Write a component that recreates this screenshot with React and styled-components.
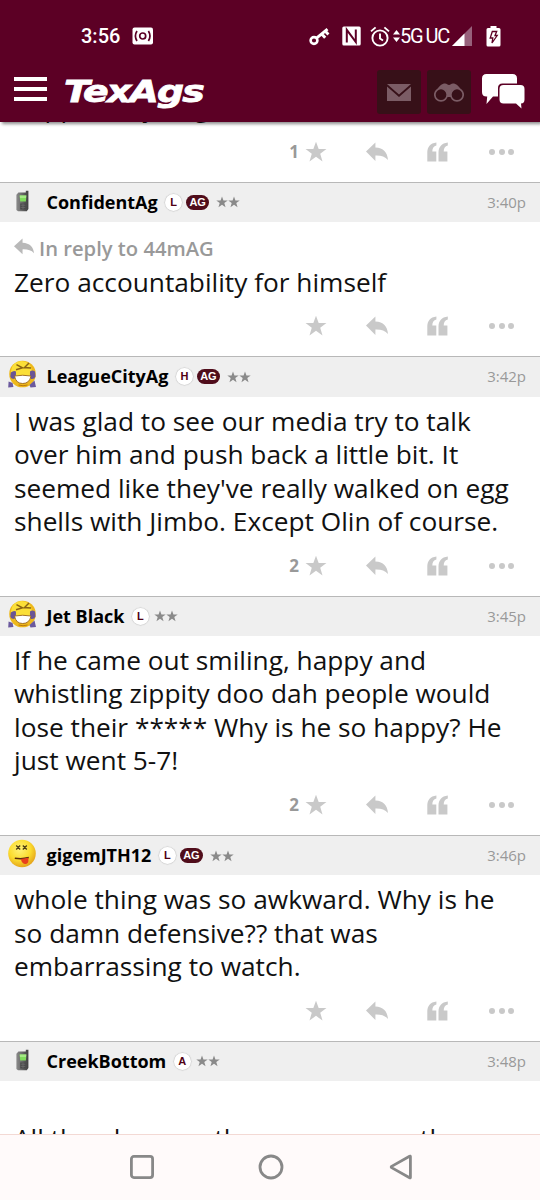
import React from 'react'
import styled, { createGlobalStyle } from 'styled-components'

const posts = [
  {
    user: 'ConfidentAg',
    avatar: 'phone',
    forum: 'L',
    ag: true,
    time: '3:40p',
    replyTo: '44mAG',
    lines: ['Zero accountability for himself'],
  },
  {
    user: 'LeagueCityAg',
    avatar: 'laugh',
    forum: 'H',
    ag: true,
    time: '3:42p',
    stars: 2,
    lines: [
      'I was glad to see our media try to talk',
      'over him and push back a little bit. It',
      "seemed like they've really walked on egg",
      'shells with Jimbo. Except Olin of course.',
    ],
  },
  {
    user: 'Jet Black',
    avatar: 'laugh',
    forum: 'L',
    time: '3:45p',
    stars: 2,
    lines: [
      'If he came out smiling, happy and',
      'whistling zippity doo dah people would',
      'lose their ***** Why is he so happy? He',
      'just went 5-7!',
    ],
  },
  {
    user: 'gigemJTH12',
    avatar: 'tongue',
    forum: 'L',
    ag: true,
    time: '3:46p',
    lines: [
      'whole thing was so awkward. Why is he',
      'so damn defensive?? that was',
      'embarrassing to watch.',
    ],
  },
  {
    user: 'CreekBottom',
    avatar: 'phone',
    forum: 'A',
    time: '3:48p',
    lines: ['\u00a0', 'All the plays are the same across the'],
  },
]

function Phone() {
  return (
    <svg width="28" height="28" viewBox="0 0 28 28">
      <defs>
        <linearGradient id="case" x1="0" x2="1">
          <stop offset="0" stopColor="#8b8b8b" />
          <stop offset="0.5" stopColor="#666" />
          <stop offset="1" stopColor="#3f3f3f" />
        </linearGradient>
      </defs>
      <path d="M17.800 3.800h2.600v18.200l-1.600 2.300H10l-1.600-1.400V7.800l2-2.200h7.400z" fill="url(#case)" />
      <path d="M11.600 8.600h6.800l-.5 6h-5.700z" fill="#7fdc5c" />
      <path d="M11.800 8.600h6.400l-.2 2.400h-6z" fill="#a5ea86" />
      <path d="M12.200 16.400h5.600v6h-5.600z" fill="#4a4a4a" />
      <path d="M12.700 18.200h4.600M12.700 20.400h4.600M15 16.600v5.600" stroke="#777" strokeWidth=".6" />
    </svg>
  )
}

function Laugh() {
  return (
    <svg width="30" height="30" viewBox="0 0 30 30">
      <circle cx="15.500" cy="14" r="13.300" fill="#eeb91c" />
      <circle cx="14.500" cy="11.500" r="10.500" fill="#fbdf38" />
      <path d="M9.500 4.600l6 3.200-6.500 2M22 3l-4.500 4.600 6.500.4" fill="none" stroke="#8a6414" strokeWidth="1.500" />
      <path d="M3.800 12.500q3-2.500 5.200-1 .6 4-1.500 7.500-3.500 0-4.200-2.500zM28 11.500q-3-2-5 0-.6 4 1 7.500 3.500.5 4.600-2.500z" fill="#6a5596" />
      <path d="M7.500 16q8-1.500 16.500 0-1.500 7.500-8.300 7.500T7.500 16z" fill="#fff" stroke="#9a6418" strokeWidth=".9" />
      <path d="M11.500 25q4.500 1.500 9 0" fill="none" stroke="#b9780f" strokeWidth="1" />
      <path d="M1.600 21.500l4 1.500.8 4-5.200.6zM27.500 20.500l1.500 6.500-5.500.4-1-2.400z" fill="#6b5a9e" />
    </svg>
  )
}

function Tongue() {
  return (
    <svg width="30" height="30" viewBox="0 0 30 30">
      <defs>
        <radialGradient id="face" cx=".42" cy=".35" r=".65">
          <stop offset="0" stopColor="#fff27a" />
          <stop offset="0.6" stopColor="#fbdc2e" />
          <stop offset="1" stopColor="#e5a51c" />
        </radialGradient>
      </defs>
      <circle cx="15" cy="14.500" r="13.800" fill="url(#face)" />
      <path d="M9.200 6.500l4 4m0-4l-4 4M15.800 6.500l4 4m0-4l-4 4" stroke="#4c3c12" strokeWidth="1.300" />
      <path d="M7.800 19.200q7 1.200 14-.6" fill="none" stroke="#5a2c0e" strokeWidth="1.600" />
      <path d="M13.800 20l7.400-1.200c.6 3 .2 5.400-1.600 6-2.600.8-5-1-5.800-4.800z" fill="#e8401c" />
    </svg>
  )
}

const avatars = { phone: Phone, laugh: Laugh, tongue: Tongue }

function StarIcon({ size, color }) {
  return (
    <svg width={size} height={size} viewBox="0 0 24 24">
      <path fill={color} d="M12 .8l2.900 8h8.500l-6.800 5.100 2.500 8.400-7.100-5-7.100 5 2.500-8.400L.6 8.800h8.500z" />
    </svg>
  )
}

function ReplyIcon({ width, height, color }) {
  return (
    <svg width={width} height={height} viewBox="0 0 22 20" preserveAspectRatio="none">
      <path fill={color} d="M0 9.600L9.400.6v5C17.400 6 21.400 10.400 22 18c-3-3.600-7-4.800-12.600-4.600v5.600z" />
    </svg>
  )
}

function QuoteIcon() {
  return (
    <svg width="21" height="20" viewBox="0 0 21 20">
      <path fill="#c9c9c9" d="M9.400.4v3.200C6.600 4.400 5.400 6 5.300 9.600h4V19.400H.3V10.600C.3 4.800 3.200 1.200 9.400.4zM20.800.4v3.200C18 4.400 16.800 6 16.700 9.600h3.700V19.400H11.500V10.600C11.500 4.800 14.600 1.200 20.800.4z" />
    </svg>
  )
}

function PostActions({ stars }) {
  return (
    <Actions>
      <Count>{stars}</Count>
      <StarIcon size={22} color="#c9c9c9" />
      <ActionSlot>
        <ReplyIcon width={22} height={20} color="#c9c9c9" />
      </ActionSlot>
      <ActionSlot>
        <QuoteIcon />
      </ActionSlot>
      <Dots>
        <Dot />
        <Dot />
        <Dot />
      </Dots>
    </Actions>
  )
}

function Post({ post }) {
  const Avatar = avatars[post.avatar]
  return (
    <PostBox>
      <PostHeader>
        <AvatarBox>
          <Avatar />
        </AvatarBox>
        <UserName>{post.user}</UserName>
        <Forum>{post.forum}</Forum>
        {post.ag && <AgBadge>AG</AgBadge>}
        <Rating $wide={post.ag}>
          <StarIcon size={12} color="#8a8a8a" />
          <StarIcon size={12} color="#8a8a8a" />
        </Rating>
        <Time>{post.time}</Time>
      </PostHeader>
      <Body>
        {post.replyTo && (
          <InReply>
            <ReplyIcon width={20} height={17} color="#b9b9b9" />
            <span>In reply to {post.replyTo}</span>
          </InReply>
        )}
        {post.lines.map((line, i) => (
          <Line key={i}>{line}</Line>
        ))}
      </Body>
      <PostActions stars={post.stars} />
    </PostBox>
  )
}

function StatusBar() {
  return (
    <Status>
      <Clock>3:56</Clock>
      <svg width="22" height="18" viewBox="0 0 22 18">
        <rect x=".5" y=".5" width="20.500" height="17" rx="2" fill="#fff" />
        <g fill="none" stroke="#5c0025" strokeWidth="1.700">
          <circle cx="10.700" cy="9" r="3" />
          <path d="M5 4Q1.800 9 5 14M16.400 4Q19.600 9 16.400 14" />
        </g>
      </svg>
      <StatusRight>
        <svg width="21" height="19" viewBox="0 0 21 19">
          <circle cx="5" cy="13.500" r="3.400" fill="none" stroke="#fff" strokeWidth="2.600" />
          <path d="M7.500 11.200L18.500 2.200M13 7.200l3.200 3.600M16.400 4.200l3 3.200" stroke="#fff" strokeWidth="2.900" fill="none" />
        </svg>
        <NfcSlot>
          <svg width="19" height="20" viewBox="0 0 19 20">
            <rect x=".3" y=".5" width="18.400" height="19" rx="1.500" fill="#fff" />
            <path d="M4.800 16.500V3.800L13.800 16V3.500" fill="none" stroke="#5c0025" strokeWidth="2" />
          </svg>
        </NfcSlot>
        <AlarmSlot>
          <svg width="20" height="21" viewBox="0 0 20 21" fill="none" stroke="#fff" strokeWidth="1.900">
            <circle cx="10" cy="12" r="7.600" />
            <path d="M10 7.500V12.500l3 2M1 5.400L5.600 1.400M19 5.400L14.400 1.400" />
          </svg>
        </AlarmSlot>
        <svg width="7" height="12" viewBox="0 0 7 12">
          <path d="M3.500 0L7 4.600H0zM3.500 12L0 7.400h7z" fill="#fff" />
        </svg>
        <Network>5G<span>UC</span></Network>
        <svg width="21" height="20" viewBox="0 0 21 20">
          <path d="M20 0v20H0z" fill="#97617b" />
          <path d="M12.500 7.500V20H0z" fill="#fff" />
        </svg>
        <BatterySlot>
          <svg width="15" height="21" viewBox="0 0 15 21">
            <path d="M4.500 0h6v2H13q1.500 0 1.500 1.500v15.500q0 1.500-1.500 1.500H2q-1.500 0-1.500-1.500V3.500Q.5 2 2 2h2.500z" fill="#fff" />
            <path d="M6.300 5.500h4.400L9 9.500h2.200L6 17l.8-5H4.200z" fill="none" stroke="#5c0025" strokeWidth="1.300" />
          </svg>
        </BatterySlot>
      </StatusRight>
    </Status>
  )
}

function Header() {
  return (
    <TopBar>
      <StatusBar />
      <Toolbar>
        <Burger>
          <span />
          <span />
          <span />
        </Burger>
        <Logo>TexAgs</Logo>
        <ToolButton>
          <svg width="24" height="17" viewBox="0 0 24 17">
            <path d="M0 0h24L12 10.600zM0 2.400L12 13 24 2.400V17H0z" fill="#7b5c65" />
          </svg>
        </ToolButton>
        <ToolButton>
          <svg width="30" height="19" viewBox="0 0 30 19">
            <path d="M3 7C5 3 8 .5 11 .5c2 0 2.500 1.500 4 1.500s2-1.500 4-1.500c3 0 6 2.500 8 6.500l-5 3-5 4h-4l-4-4z" fill="#7b5c65" />
            <circle cx="7" cy="11.700" r="6.200" fill="#371018" stroke="#7b5c65" strokeWidth="1.700" />
            <circle cx="23" cy="11.700" r="6.200" fill="#371018" stroke="#7b5c65" strokeWidth="1.700" />
          </svg>
        </ToolButton>
        <ChatButton>
          <svg width="43" height="35" viewBox="0 0 43 35">
            <path d="M4.500 0h26Q35 0 35 4.500V9.500H20.500Q16 9.500 16 14v8.500h-5L4.500 30l.7-7.500H4.500Q0 22.500 0 18V4.500Q0 0 4.500 0z" fill="#fff" />
            <path d="M21.500 11h17q4 0 4 4v10.500q0 4-3.500 4l.5 5L34 29.500H21.500q-4 0-4-4V15q0-4 4-4z" fill="#fff" />
          </svg>
        </ChatButton>
      </Toolbar>
    </TopBar>
  )
}

function NavBar() {
  return (
    <Nav>
      <svg width="24" height="24" viewBox="0 0 24 24">
        <rect x="1.400" y="1.400" width="21.200" height="21.200" rx="2.500" />
      </svg>
      <svg width="28" height="26" viewBox="0 0 28 26">
        <circle cx="13" cy="13" r="11" />
      </svg>
      <svg width="24" height="26" viewBox="0 0 24 26">
        <path d="M21.400 2.600v20.800q0 .8-.8.400L2.600 13.600q-.8-.6 0-1.200L20.600 2.200q.8-.4.800.4z" />
      </svg>
    </Nav>
  )
}

export default function App() {
  return (
    <Screen>
      <GlobalStyle />
      <Header />
      <Thread>
        <FirstPost>
          <Line>Supposedly to go</Line>
          <PostActions stars={1} />
        </FirstPost>
        {posts.map((post) => (
          <Post key={post.user} post={post} />
        ))}
      </Thread>
      <NavBar />
    </Screen>
  )
}

const GlobalStyle = createGlobalStyle`
  * {
    box-sizing: border-box;
  }
  body {
    margin: 0;
    background: #fff;
    font-family: 'Open Sans', 'Noto Sans', sans-serif;
  }
  svg {
    display: block;
    flex-shrink: 0;
  }
`;

const Screen = styled.div`
  display: flex;
  flex-direction: column;
  width: 540px;
  height: 1200px;
  overflow: hidden;
`;

const TopBar = styled.header`
  position: relative;
  z-index: 2;
  flex: 0 0 122px;
  background: #5c0025;
  color: #fff;
  box-shadow: 2px 2px 3px rgba(0, 0, 0, 0.45);
`;

const Status = styled.div`
  display: flex;
  align-items: center;
  height: 62px;
  padding: 10px 39px 0 81px;
  font-family: Roboto, sans-serif;
`;

const Clock = styled.span`
  width: 51px;
  font-size: 20px;
  font-weight: 500;
  line-height: 20px;
`;

const StatusRight = styled.div`
  display: flex;
  align-items: center;
  margin-left: auto;
`;

const NfcSlot = styled.div`
  margin-left: 12px;
`;

const AlarmSlot = styled.div`
  margin: 0 3px 0 9px;
`;

const Network = styled.span`
  display: flex;
  gap: 3px;
  margin-right: 3px;
  font-size: 20px;
  line-height: 20px;
  letter-spacing: -1.200px;
`;

const BatterySlot = styled.div`
  margin-left: 13px;
`;

const Toolbar = styled.div`
  display: flex;
  align-items: center;
  height: 60px;
  padding: 0 15px 0 14px;
`;

const Burger = styled.div`
  display: flex;
  flex-direction: column;
  gap: 6px;
  width: 33px;
  margin-bottom: 6px;
  span {
    height: 4px;
    background: #fff;
  }
`;

const Logo = styled.div`
  flex: 1;
  margin: 0 0 3px 17px;
  font-family: 'DejaVu Sans', sans-serif;
  font-size: 31px;
  font-weight: bold;
  font-style: italic;
  line-height: 36px;
  letter-spacing: -1.500px;
  -webkit-text-stroke: 0.800px #fff;
  transform: scaleX(1.220);
  transform-origin: left;
`;

const ToolButton = styled.div`
  display: flex;
  align-items: center;
  justify-content: center;
  width: 44px;
  height: 44px;
  margin-right: 6px;
  border-radius: 3px;
  background: #371018;
`;

const ChatButton = styled.div`
  margin: 0 0 2px 5px;
`;

const Thread = styled.main`
  flex: 1;
  min-height: 0;
  overflow: hidden;
  background: #fff;
`;

/* scrolled most of the way under the top bar */
const FirstPost = styled.article`
  margin-top: -31px;
  > :first-child {
    margin-left: 14px;
  }
`;

const PostBox = styled.article`
  border-top: 1px solid #b8b8b8;
`;

const PostHeader = styled.div`
  display: flex;
  align-items: center;
  height: 39.300px;
  padding: 0 14px 0 7px;
  background: #efefef;
`;

const AvatarBox = styled.div`
  display: flex;
  justify-content: center;
  width: 30px;
  margin: 0 9.500px 3px 0;
`;

const UserName = styled.span`
  margin: 0 7.500px 1px 0;
  color: #000;
  font-size: 18px;
  font-weight: 700;
`;

const Forum = styled.span`
  width: 17px;
  height: 17px;
  border-radius: 50%;
  background: #fff;
  box-shadow: 0 0 1px 0.500px #c4c4c4;
  color: #500014;
  font: bold 11px/17px 'Liberation Sans', sans-serif;
  text-align: center;
`;

const AgBadge = styled.span`
  width: 23px;
  height: 15px;
  margin-left: 4px;
  border-radius: 8px;
  background: #500d1b;
  color: #fff;
  font: bold 11px/15px 'Liberation Sans', sans-serif;
  text-align: center;
`;

const Rating = styled.span`
  display: flex;
  margin-left: ${(props) => (props.$wide ? '7px' : '5.500px')};
`;

const Time = styled.span`
  margin: 0 0 1px auto;
  color: #999;
  font-size: 15px;
`;

const Body = styled.div`
  padding: 8px 14px 0;
`;

const InReply = styled.div`
  display: flex;
  align-items: center;
  gap: 5px;
  height: 36px;
  color: #999;
  font-size: 20.200px;
  font-weight: 600;
  svg {
    margin-bottom: 2px;
  }
  span {
    margin-top: 1px;
  }
`;

const Line = styled.div`
  height: 33.500px;
  color: #111;
  font-size: 26.280px;
  line-height: 33.500px;
  white-space: nowrap;
`;

const Actions = styled.div`
  display: flex;
  align-items: center;
  height: 57px;
  padding: 0 26px 3px 270px;
`;

const Count = styled.span`
  width: 29px;
  margin-right: 6px;
  color: #999;
  font-size: 17px;
  font-weight: 700;
  text-align: right;
`;

const ActionSlot = styled.div`
  margin-left: 39px;
`;

const Dots = styled.div`
  display: flex;
  gap: 3.500px;
  margin-left: auto;
`;

const Dot = styled.span`
  width: 6px;
  height: 6px;
  border-radius: 50%;
  background: #c9c9c9;
`;

const Nav = styled.nav`
  display: flex;
  flex: 0 0 66px;
  align-items: center;
  justify-content: space-between;
  padding: 0 127px 1px 130px;
  border-top: 1px solid #f3d9d4;
  background: #fffafa;
  svg {
    fill: none;
    stroke: #888;
    stroke-width: 2.800;
    stroke-linejoin: round;
  }
`;
